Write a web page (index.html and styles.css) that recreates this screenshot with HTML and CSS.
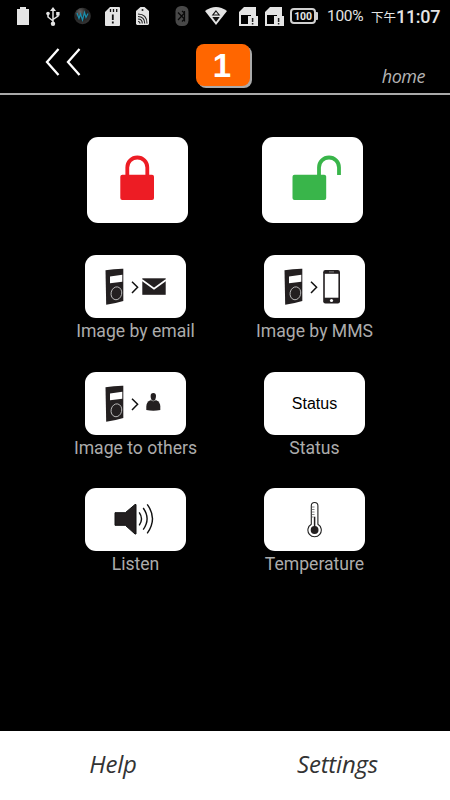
FILE: index.html
```html
<!DOCTYPE html>
<html lang="en">

<head>
    <meta charset="UTF-8">
    <meta name="viewport" content="width=device-width, initial-scale=1.0">
    <title>home</title>
    <link rel="stylesheet" href="styles.css">
</head>

<body>
    <!-- shared door station and arrow -->
    <svg width="0" height="0" class="defs">
        <defs>
            <g id="station">
                <path d="M20.5 15.3 Q29 13.6 38.3 13.7 V46 Q30 48.6 21.2 49.7 Z" fill="#231f20" />
                <path d="M25 21.4 L37.3 19.7 V26.7 L25 28.2 Z" fill="#fff" />
                <ellipse cx="31.4" cy="38.3" rx="5.3" ry="6.5" fill="none" stroke="#bbb" stroke-width=".9" transform="rotate(12 31.4 38.3)" />
                <path d="M47 26.7 L52.6 32.3 L47 38" fill="none" stroke="#111" stroke-width="1.5" />
            </g>
            <g id="sim">
                <path d="M5 0 H17 V19 H0 V5 Z" fill="#e4e4e4" />
                <path d="M2 8 H12 V10 H9 V17 H2 Z" fill="#000" />
                <path d="M9 9 H19 V19 H9 Z" fill="#e4e4e4" />
                <path d="M13.6 11 V15 M13.6 16 V17.5" stroke="#222" stroke-width="1.5" />
            </g>
        </defs>
    </svg>
    <div class="wrapper">
        <div class="status-bar">
            <svg class="battery" width="12" height="18" viewBox="0 0 12 18">
                <path d="M3 0 H9 V2 H12 V18 H0 V2 H3 Z" fill="#e4e4e4" />
            </svg>
            <svg class="usb" width="14" height="19" viewBox="0 0 14 19">
                <g fill="none" stroke="#e4e4e4" stroke-width="1.5">
                    <path d="M7 2 V17 M2 7 V10 L7 14 M12 7 V9 L7 12.5" />
                </g>
                <path d="M7 0 L10 4 H4 Z M10.2 5 H13.6 V8.4 H10.2 Z" fill="#e4e4e4" />
                <circle cx="2" cy="6.6" r="1.8" fill="#e4e4e4" />
                <circle cx="7" cy="16.7" r="2.2" fill="#e4e4e4" />
            </svg>
            <svg class="ball" width="17" height="18" viewBox="0 0 17 18">
                <defs>
                    <radialGradient id="shade" cx=".35" cy=".25" r=".75">
                        <stop offset="0" stop-color="#666" />
                        <stop offset=".5" stop-color="#222" />
                        <stop offset="1" stop-color="#333" />
                    </radialGradient>
                </defs>
                <circle cx="8.5" cy="9" r="8.3" fill="url(#shade)" />
                <path d="M3 6 L5 11.5 L6.5 7 L8.5 13 L10.5 5.5 L12 10.5 L14 6.5" fill="none" stroke="#1b8fae" stroke-width="1.2" />
            </svg>
            <svg class="sd" width="15" height="19" viewBox="0 0 15 19">
                <path d="M5 0 H14 Q15 0 15 1 V18 Q15 19 14 19 H1 Q0 19 0 18 V5 Z" fill="#e4e4e4" />
                <path d="M5.5 2 V5 M8.5 2 V5 M11.7 2 V5" stroke="#111" stroke-width="1.3" />
                <path d="M7.8 7.5 V13 M7.8 14.5 V16.5" stroke="#111" stroke-width="1.8" />
            </svg>
            <svg class="tag" width="13" height="18" viewBox="0 0 13 18">
                <path d="M4.5 0 H8.5 L13 4 V17 L12 18 H1 L0 17 V4 Z" fill="#e4e4e4" />
                <circle cx="6.5" cy="3" r="1" fill="#222" />
                <path d="M2 7 Q11 7 11 16.5 M2 9.5 Q8.7 9.7 8.7 16.5 M2 12 Q6.3 12 6.3 16.5 M2 14.5 Q4 14.5 4 16.5" fill="none" stroke="#222" stroke-width="1.1" />
            </svg>
            <svg class="bluetooth" width="14" height="20" viewBox="0 0 14 20">
                <rect x=".5" width="13" height="20" rx="5.5" fill="#484848" />
                <path d="M3 6.5 L9.5 13 L7 15.5 M3 14 L9.5 7 L7 5 M9.5 5 V15.5" fill="none" stroke="#090909" stroke-width="1.2" />
            </svg>
            <svg class="wifi" width="22" height="18" viewBox="0 0 22 18">
                <path d="M0 4 Q11 -4 22 4 L11 18 Z" fill="#e4e4e4" />
                <path d="M11 4 L14.2 8 H7.8 Z" fill="#e4e4e4" stroke="#111" stroke-width="1.1" />
                <path d="M7.3 10 H14.7 L11 15 Z" fill="#111" />
            </svg>
            <svg class="sim" width="19" height="19" viewBox="0 0 19 19"><use href="#sim" /></svg>
            <svg class="sim second" width="19" height="19" viewBox="0 0 19 19"><use href="#sim" /></svg>
            <div class="charge">100</div>
            <div class="nub"></div>
            <div class="percent">100%</div>
            <div class="period">下午</div>
            <div class="clock">11:07</div>
        </div>
        <div class="header">
            <svg class="back" width="36" height="28" viewBox="0 0 36 28">
                <path d="M13.5 1 L2 14 L13.5 27 M34.5 1 L23 14 L34.5 27" fill="none" stroke="#fff" stroke-width="2.3" />
            </svg>
            <div class="number">1</div>
            <div class="home">home</div>
        </div>
        <div class="content">
            <div class="locks">
                <div class="button lock">
                    <svg width="101" height="86" viewBox="0 0 101 86">
                        <path d="M40.3 40 V30.5 A10 10 0 0 1 60.3 30.5 V40" fill="none" stroke="#ed1c24" stroke-width="3.8" />
                        <rect x="33.3" y="37.7" width="33.7" height="25.3" rx="2" fill="#ed1c24" />
                    </svg>
                </div>
                <div class="button lock">
                    <svg width="101" height="86" viewBox="0 0 101 86">
                        <path d="M57 40 V30.5 A10 10 0 0 1 77 30.5 V38" fill="none" stroke="#39b54a" stroke-width="3.8" />
                        <rect x="30.5" y="37.7" width="33.7" height="25.3" rx="2" fill="#39b54a" />
                    </svg>
                </div>
            </div>
            <div class="actions">
                <div class="item">
                    <div class="button">
                        <svg width="101" height="63" viewBox="0 0 101 63">
                            <use href="#station" />
                            <rect x="57.3" y="23.3" width="23.4" height="16.5" fill="#231f20" />
                            <path d="M57 25 L69 33.8 L81 25" fill="none" stroke="#fff" stroke-width="1.7" />
                        </svg>
                    </div>
                    <div class="label">Image by email</div>
                </div>
                <div class="item">
                    <div class="button">
                        <svg width="101" height="63" viewBox="0 0 101 63">
                            <use href="#station" />
                            <rect x="59.2" y="15" width="16.8" height="33.5" rx="2.2" fill="#231f20" />
                            <rect x="60.8" y="18.8" width="13.6" height="23.9" fill="#fff" />
                            <path d="M65 16.9 H70" stroke="#999" stroke-width=".8" />
                            <circle cx="67.5" cy="45.5" r="1.6" fill="#fff" />
                        </svg>
                    </div>
                    <div class="label">Image by MMS</div>
                </div>
                <div class="item">
                    <div class="button">
                        <svg width="101" height="63" viewBox="0 0 101 63">
                            <use href="#station" />
                            <path d="M65.3 28.3 H71.3 Q75.3 30 75.3 34.5 V38 Q68.3 39.4 61.3 38 V34.5 Q61.3 30 65.3 28.3 Z" fill="#231f20" />
                            <path d="M65.6 24 A2.7 2.9 0 0 1 71 24 Q71 26.5 70 28 Q68.3 29.6 66.6 28 Q65.6 26.5 65.6 24 Z" fill="#231f20" />
                            <path d="M65.5 27.8 Q68.3 30.3 71.1 27.8" fill="none" stroke="#999" stroke-width=".7" />
                        </svg>
                    </div>
                    <div class="label">Image to others</div>
                </div>
                <div class="item">
                    <div class="button text">Status</div>
                    <div class="label">Status</div>
                </div>
                <div class="item">
                    <div class="button">
                        <svg width="101" height="63" viewBox="0 0 101 63">
                            <path d="M30 24.7 H40.3 L50 16.5 H51 V46 H50 L40.3 37.3 H30 Z" fill="#231f20" stroke="#111" stroke-linejoin="round" />
                            <g fill="none" stroke="#111" stroke-width="1.4">
                                <path d="M54.2 24.3 Q58.8 30.8 54.2 37.3" />
                                <path d="M58.2 20 Q66 30.8 58.2 41.7" />
                                <path d="M62.2 16.3 Q72.8 30.8 62.2 45.4" />
                            </g>
                        </svg>
                    </div>
                    <div class="label">Listen</div>
                </div>
                <div class="item">
                    <div class="button">
                        <svg width="101" height="63" viewBox="0 0 101 63">
                            <path d="M47.3 36.2 V17.8 A3.3 3.3 0 0 1 53.9 17.8 V36.2 A6.7 6.7 0 1 1 47.3 36.2 Z" fill="#fff" stroke="#222" stroke-width="1.1" />
                            <circle cx="50.6" cy="42" r="3.9" fill="#231f20" />
                            <path d="M50.6 28.7 V40" stroke="#231f20" stroke-width="1.5" />
                            <path d="M47.5 19 H50.5 M47.5 21.5 H50.5 M47.5 24 H50.5 M47.5 26.5 H50.5 M47.5 29 H49.5" stroke="#555" stroke-width=".7" />
                        </svg>
                    </div>
                    <div class="label">Temperature</div>
                </div>
            </div>
        </div>
        <div class="bottom">
            <div class="help">Help</div>
            <div class="settings">Settings</div>
        </div>
    </div>
</body>

</html>
```
FILE: styles.css
```css
body {
    margin: 0;
    background-color: black;
    font-family: Roboto, "Noto Sans CJK TC", sans-serif;
}

.defs {
    display: block;
}

.wrapper {
    width: 450px;
    height: 800px;
    display: flex;
    flex-direction: column;
    overflow: hidden;
    background-color: black;
}

.status-bar {
    height: 32px;
    display: flex;
    align-items: center;
    color: #e4e4e4;
    white-space: nowrap;
}

.status-bar > * {
    flex-shrink: 0;
}

.battery {
    margin-left: 17px;
}

.usb {
    margin-left: 17px;
}

.ball {
    margin-left: 14px;
}

.sd {
    margin-left: 14px;
}

.tag {
    margin-left: 16px;
}

.bluetooth {
    margin-left: 26px;
}

.wifi {
    margin-left: 16px;
}

.sim {
    margin-left: 12px;
}

.sim.second {
    margin-left: 7px;
}

.charge {
    box-sizing: border-box;
    width: 26px;
    height: 16px;
    margin-left: 6px;
    border: 2px solid #d0d0d0;
    border-radius: 4px;
    font-size: 10.5px;
    font-weight: bold;
    line-height: 13px;
    letter-spacing: -0.2px;
    text-align: center;
}

.nub {
    width: 2px;
    height: 8px;
    border-radius: 0 1px 1px 0;
    background-color: #d0d0d0;
}

.percent {
    width: 37px;
    margin-left: 9px;
    font-size: 15.5px;
    line-height: 20px;
    letter-spacing: -0.3px;
}

.period {
    width: 25px;
    margin-left: 7px;
    font-size: 12.5px;
}

.clock {
    font-size: 18px;
    font-weight: 500;
    letter-spacing: -0.3px;
}

.header {
    box-sizing: border-box;
    height: 63px;
    display: flex;
    align-items: flex-start;
    border-bottom: 2px solid #a9a9a9;
}

.back {
    margin: 16px 0 0 45px;
}

.number {
    width: 54px;
    height: 42px;
    margin: 12px 0 0 115px;
    border-radius: 8px;
    background-color: #ff6600;
    box-shadow: 2px 2px 0 #aaa;
    color: white;
    font: bold 33px/44px "Liberation Sans", sans-serif;
    text-align: center;
    text-indent: -2px;
}

.home {
    margin: 32px 25px 0 auto;
    color: #b4b4b4;
    font: italic 18px/24px "Open Sans", sans-serif;
    letter-spacing: -0.5px;
}

.content {
    flex: 1;
}

.button {
    width: 101px;
    height: 63px;
    border-radius: 11px;
    background-color: white;
}

.button svg {
    display: block;
}

.locks {
    display: flex;
    gap: 74px;
    padding: 42px 0 0 87px;
}

.button.lock {
    height: 86px;
}

.actions {
    display: grid;
    grid-template-columns: 101px 101px;
    grid-auto-rows: 116.4px;
    column-gap: 78px;
    padding: 32.2px 0 0 85px;
}

.item {
    display: flex;
    flex-direction: column;
    align-items: center;
}

.button.text {
    color: black;
    font: 16px/63px "Liberation Sans", sans-serif;
    text-align: center;
}

.label {
    color: #acacac;
    font-size: 17.6px;
    line-height: 26px;
    white-space: nowrap;
}

.bottom {
    height: 69px;
    display: grid;
    grid-template-columns: 1fr 1fr;
    background-color: white;
    color: #333;
    font: italic 24px/66px "Open Sans", sans-serif;
    letter-spacing: -0.2px;
    text-align: center;
}

.help {
    text-indent: 1px;
}
```
